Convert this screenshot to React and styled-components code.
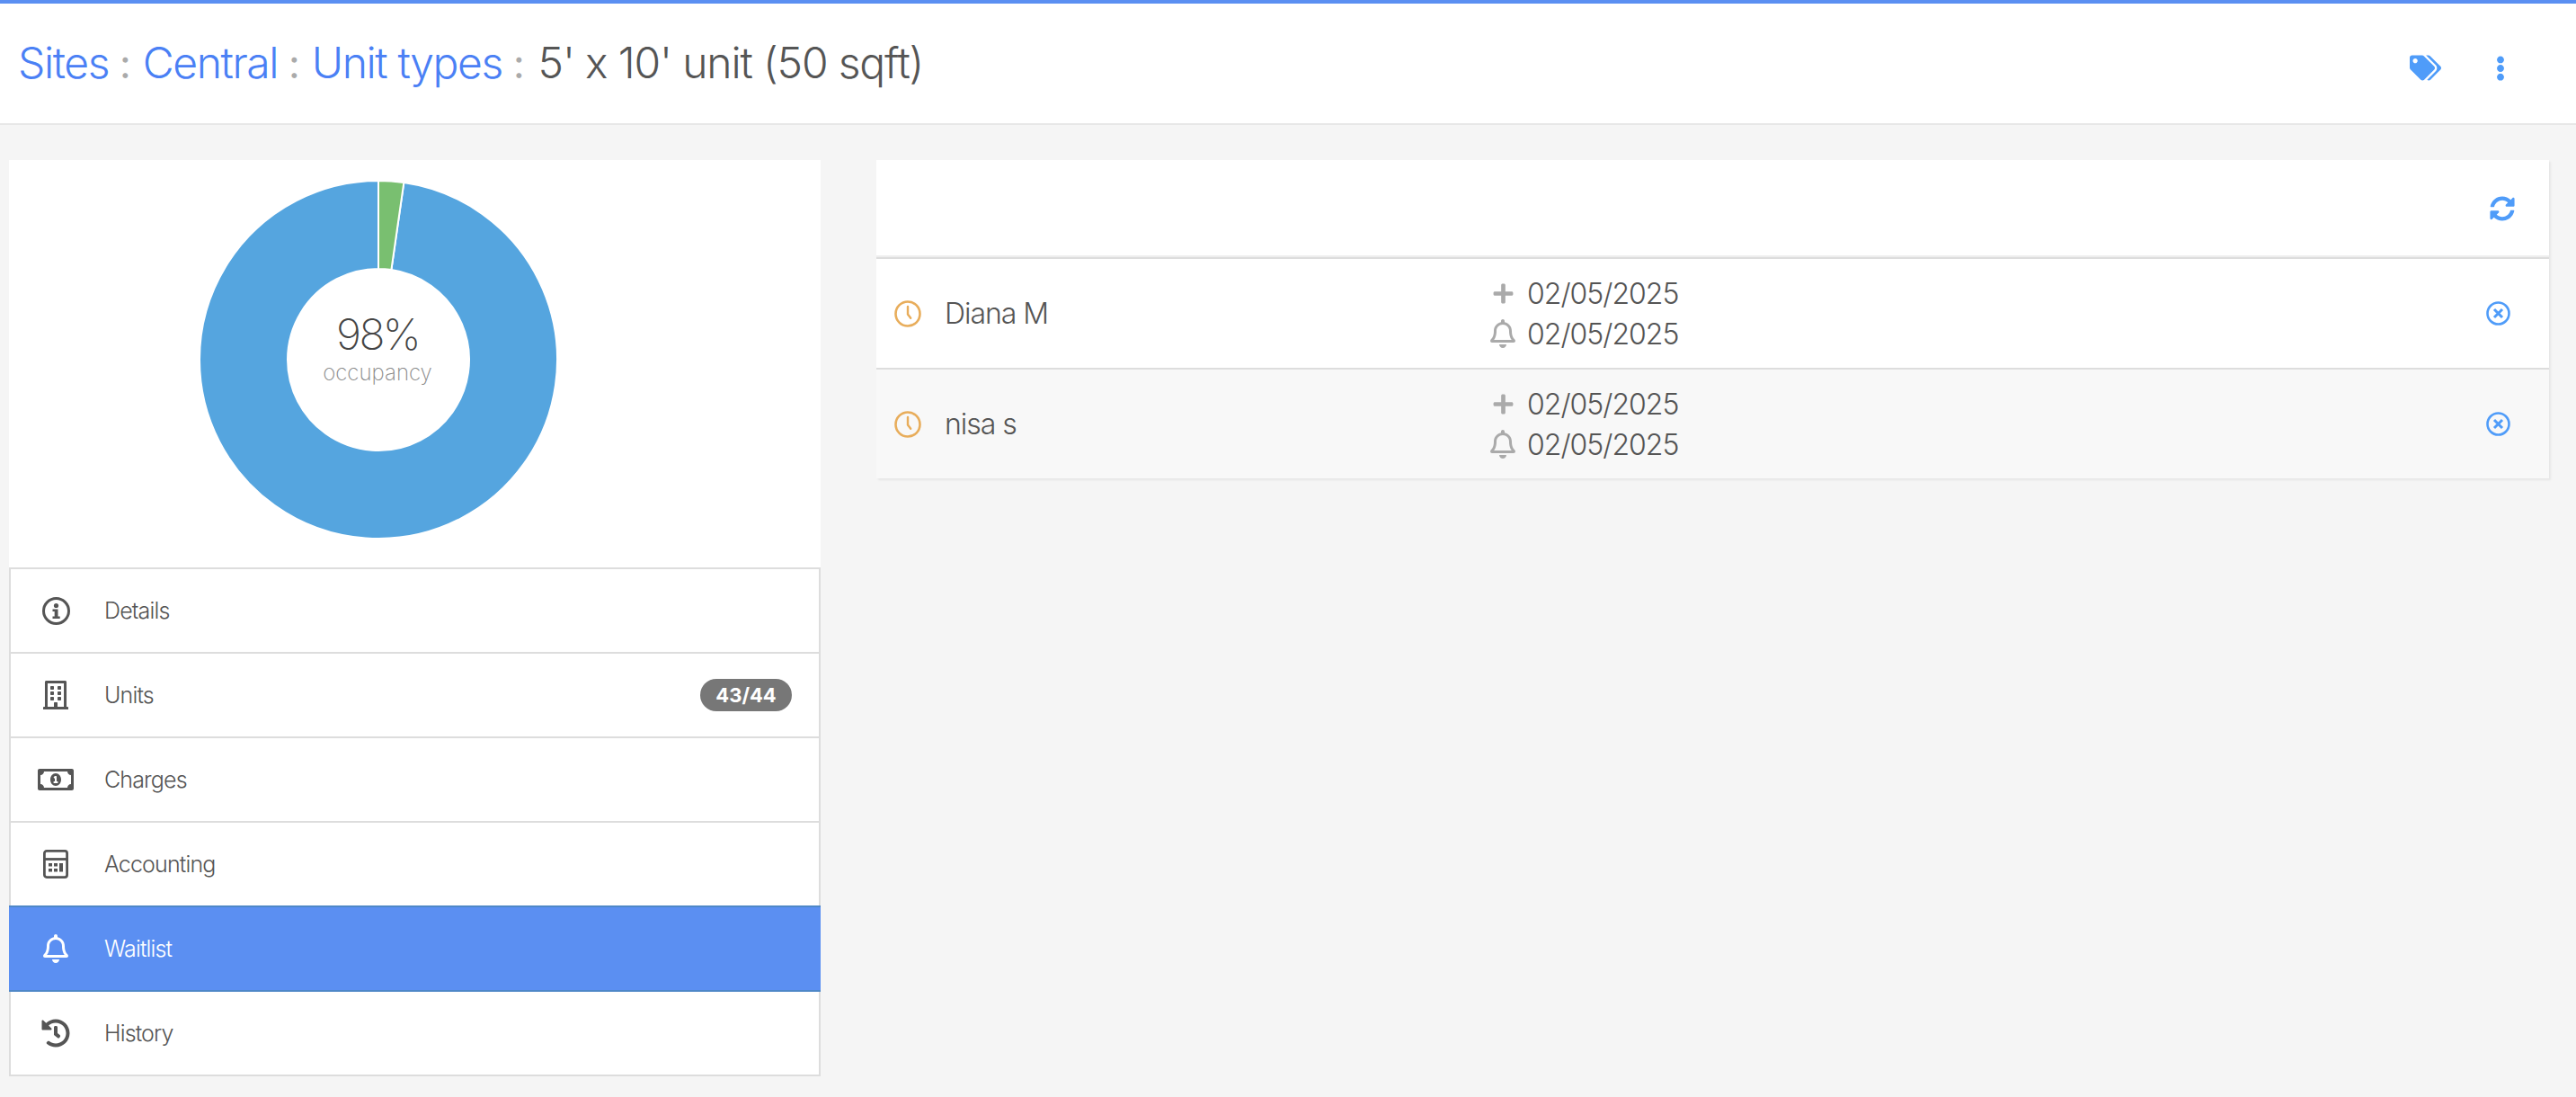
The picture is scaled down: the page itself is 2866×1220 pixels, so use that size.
import React from "react";
import styled, { createGlobalStyle } from "styled-components";
import {
	FaTags,
	FaEllipsisV,
	FaSyncAlt,
	FaRegBuilding,
	FaRegMoneyBillAlt,
	FaRegBell,
	FaHistory,
	FaPlus,
} from "react-icons/fa";

const GlobalStyle = createGlobalStyle`
	html, body {
		margin: 0;
		padding: 0;
		background: #f5f5f5;
		font-family: Inter, "Liberation Sans", sans-serif;
		font-weight: 300;
		color: #555;
	}
`;

const Page = styled.div`
	width: 2866px;
	height: 1220px;
	overflow: hidden;
	box-sizing: border-box;
	border-top: 4px solid #5b8ff2;
`;

const Header = styled.header`
	height: 131px;
	display: flex;
	align-items: center;
	justify-content: space-between;
	background: #fff;
	border-bottom: 2px solid #e7e7e7;
	padding: 0 70px 2px 20px;
`;

const Crumbs = styled.h1`
	margin: 0;
	font-size: 48px;
	line-height: 1;
	font-weight: 300;
	letter-spacing: -1.4px;
	color: #555;
	display: flex;
	align-items: baseline;
`;

const Crumb = styled.a`
	color: #4a80f5;
`;

const Sep = styled.span`
	color: #aaa;
	font-size: 44px;
	font-weight: 400;
	letter-spacing: 0;
	margin: 0 13px 0 12px;
`;

const CurrentCrumb = styled.span`
	margin-left: 2px;
	letter-spacing: -1.15px;
`;

const HeaderActions = styled.div`
	display: flex;
	align-items: center;
	gap: 52px;
	padding-top: 12px;
	color: #4f9cf9;
	font-size: 28px;
	svg {
		display: block;
	}
`;

const Content = styled.main`
	display: grid;
	grid-template-columns: 903px 1861px;
	column-gap: 62px;
	padding: 39px 30px 0 10px;
	align-items: start;
`;

const Sidebar = styled.aside`
	display: flex;
	flex-direction: column;
`;

const ChartBox = styled.div`
	position: relative;
	height: 453px;
	background: #fff;
	display: flex;
	padding-left: 211px;
`;

const Donut = styled.svg`
	width: 400px;
	height: 400px;
	margin-top: 22px;
`;

const ChartLabel = styled.div`
	position: absolute;
	left: 300px;
	width: 220px;
	top: 165px;
	text-align: center;
`;

const Percent = styled.div`
	font-size: 48px;
	line-height: 58px;
	font-weight: 200;
	letter-spacing: -2.6px;
	color: #444;
`;

const Occupancy = styled.div`
	font-size: 24px;
	line-height: 28px;
	font-weight: 200;
	color: #888;
`;

const Menu = styled.nav`
	display: flex;
	flex-direction: column;
	border: 2px solid #ddd;
	border-top: none;
	background: #fff;
`;

const MenuItem = styled.div`
	height: 92px;
	border-top: ${props =>
		props.$afterActive ? "none" : `2px solid ${props.$active ? "#4f88c8" : "#ddd"}`};
	border-bottom: ${props => (props.$active ? "2px solid #4f88c8" : "none")};
	margin: ${props => (props.$active ? "0 -2px" : "0")};
	padding: ${props => (props.$active ? "0 32px 0 2px" : "0 30px 0 0")};
	background: ${props => (props.$active ? "#5b8ff2" : "#fff")};
	color: ${props => (props.$active ? "#fff" : "#555")};
	display: flex;
	align-items: center;
	font-size: 25px;
	font-weight: 300;
	letter-spacing: -0.85px;
`;

const MenuIcon = styled.span`
	width: 104px;
	box-sizing: border-box;
	padding-right: 4px;
	flex: none;
	display: flex;
	justify-content: center;
	font-size: ${props => props.$size || 32}px;
	color: ${props => (props.$active ? "#fff" : "#555")};
	svg {
		display: block;
	}
`;

const Badge = styled.span`
	margin-left: auto;
	width: 102px;
	height: 36px;
	border-radius: 18px;
	background: #777;
	color: #fff;
	font-size: 22px;
	font-weight: 700;
	letter-spacing: 0;
	display: flex;
	align-items: center;
	justify-content: center;
`;

const Panel = styled.section`
	background: #fff;
	box-shadow: 2px 2px 2px #e6e6e6;
`;

const PanelHead = styled.div`
	height: 108px;
	display: flex;
	align-items: center;
	justify-content: flex-end;
	padding: 0 38px 0 0;
	border-bottom: 2px solid #ddd;
	box-shadow: inset 0 -2px 0 #eee;
	font-size: 28px;
	color: #4f9cf9;
	svg {
		display: block;
	}
`;

const Row = styled.div`
	display: grid;
	grid-template-columns: 663px 1fr auto;
	align-items: center;
	height: 121px;
	padding: 0 43px 0 20px;
	background: ${props => (props.$odd ? "#f8f8f8" : "#fff")};
	border-top: ${props => (props.$odd ? "2px solid #ddd" : "none")};
`;

const Person = styled.div`
	display: flex;
	align-items: center;
	gap: 26px;
	font-size: 32px;
	font-weight: 300;
	letter-spacing: -1.05px;
	color: #555;
	svg {
		display: block;
	}
`;

const Dates = styled.div`
	display: grid;
	grid-template-columns: 28px auto;
	column-gap: 13px;
	justify-content: start;
	align-items: center;
	font-size: 32px;
	font-weight: 300;
	line-height: 45px;
	letter-spacing: -1px;
	color: #555;
`;

const DateIcon = styled.span`
	display: flex;
	justify-content: center;
	color: #aaa;
	font-size: ${props => props.$size}px;
	svg {
		display: block;
	}
`;

const ClockIcon = () => (
	<svg width="30" height="30" viewBox="0 0 30 30" fill="none" stroke="#e8ad5b">
		<circle cx="15" cy="15" r="13.5" strokeWidth="2.6" />
		<path d="M15 7v8.5l3.2 4.2" strokeWidth="2.4" strokeLinecap="round" />
	</svg>
);

const RemoveIcon = () => (
	<svg width="27" height="27" viewBox="0 0 27 27" fill="none" stroke="#4f9cf9">
		<circle cx="13.5" cy="13.5" r="12" strokeWidth="2.6" />
		<path d="M9 9l9 9M18 9l-9 9" strokeWidth="3" />
	</svg>
);

const InfoIcon = () => (
	<svg width="31" height="31" viewBox="0 0 31 31" fill="none">
		<circle cx="15.5" cy="15.5" r="14" stroke="currentColor" strokeWidth="3" />
		<circle cx="15.5" cy="9.5" r="2.6" fill="currentColor" />
		<path d="M11.5 13.5h6v8h2.2v2.6h-8.2v-2.6h2.2v-5.4h-2.2z" fill="currentColor" />
	</svg>
);

const CalculatorIcon = () => (
	<svg width="28" height="32" viewBox="0 0 28 32" fill="none">
		<rect x="1.4" y="1.4" width="25.2" height="29.2" rx="2.5" stroke="currentColor" strokeWidth="2.8" />
		<path d="M1.4 10.5h25.2" stroke="currentColor" strokeWidth="2.8" />
		<path
			d="M6 15h4v3.6H6zM12 15h4v3.6h-4zM18 15h4v9.6h-4zM6 21h4v3.6H6zM12 21h4v3.6h-4z"
			fill="currentColor"
		/>
	</svg>
);

// centre of the ring sits at 200,200 in its 400 box, the white stroke eats 1px each side
const ringPath = (from, to) => {
	const R = 199;
	const r = 101;
	const pt = (rad, a) => [
		200 + rad * Math.sin((a * Math.PI) / 180),
		200 - rad * Math.cos((a * Math.PI) / 180),
	];
	const [x1, y1] = pt(R, from);
	const [x2, y2] = pt(R, to);
	const [x3, y3] = pt(r, to);
	const [x4, y4] = pt(r, from);
	const large = to - from > 180 ? 1 : 0;
	return `M${x1} ${y1}A${R} ${R} 0 ${large} 1 ${x2} ${y2}L${x3} ${y3}A${r} ${r} 0 ${large} 0 ${x4} ${y4}Z`;
};

const menu = [
	{ label: "Details", icon: <InfoIcon /> },
	{ label: "Units", icon: <FaRegBuilding />, badge: "43/44" },
	{ label: "Charges", icon: <FaRegMoneyBillAlt />, size: 40 },
	{ label: "Accounting", icon: <CalculatorIcon /> },
	{ label: "Waitlist", icon: <FaRegBell />, active: true },
	{ label: "History", icon: <FaHistory /> },
];

const waitlist = [
	{ name: "Diana M", added: "02/05/2025", notified: "02/05/2025" },
	{ name: "nisa s", added: "02/05/2025", notified: "02/05/2025" },
];

export default function App() {
	const slice = (1 / 44) * 360;
	return (
		<Page>
			<GlobalStyle />
			<Header>
				<Crumbs>
					<Crumb>Sites</Crumb>
					<Sep>:</Sep>
					<Crumb>Central</Crumb>
					<Sep>:</Sep>
					<Crumb>Unit types</Crumb>
					<Sep>:</Sep>
					<CurrentCrumb>5' x 10' unit (50 sqft)</CurrentCrumb>
				</Crumbs>
				<HeaderActions>
					<FaTags size={35} />
					<FaEllipsisV />
				</HeaderActions>
			</Header>
			<Content>
				<Sidebar>
					<ChartBox>
						<Donut viewBox="0 0 400 400">
							<path d={ringPath(slice, 360)} fill="#55a5df" stroke="#fff" strokeWidth="2" />
							<path d={ringPath(0, slice)} fill="#79bf70" stroke="#fff" strokeWidth="2" />
						</Donut>
						<ChartLabel>
							<Percent>98%</Percent>
							<Occupancy>occupancy</Occupancy>
						</ChartLabel>
					</ChartBox>
					<Menu>
						{menu.map((item, i) => (
							<MenuItem
								key={item.label}
								$active={item.active}
								$afterActive={i > 0 && menu[i - 1].active}
							>
								<MenuIcon $active={item.active} $size={item.size}>
									{item.icon}
								</MenuIcon>
								{item.label}
								{item.badge && <Badge>{item.badge}</Badge>}
							</MenuItem>
						))}
					</Menu>
				</Sidebar>
				<Panel>
					<PanelHead>
						<FaSyncAlt />
					</PanelHead>
					{waitlist.map((entry, i) => (
						<Row key={entry.name} $odd={i % 2 === 1}>
							<Person>
								<ClockIcon />
								{entry.name}
							</Person>
							<Dates>
								<DateIcon $size={25}>
									<FaPlus />
								</DateIcon>
								{entry.added}
								<DateIcon $size={32}>
									<FaRegBell />
								</DateIcon>
								{entry.notified}
							</Dates>
							<RemoveIcon />
						</Row>
					))}
				</Panel>
			</Content>
		</Page>
	);
}
